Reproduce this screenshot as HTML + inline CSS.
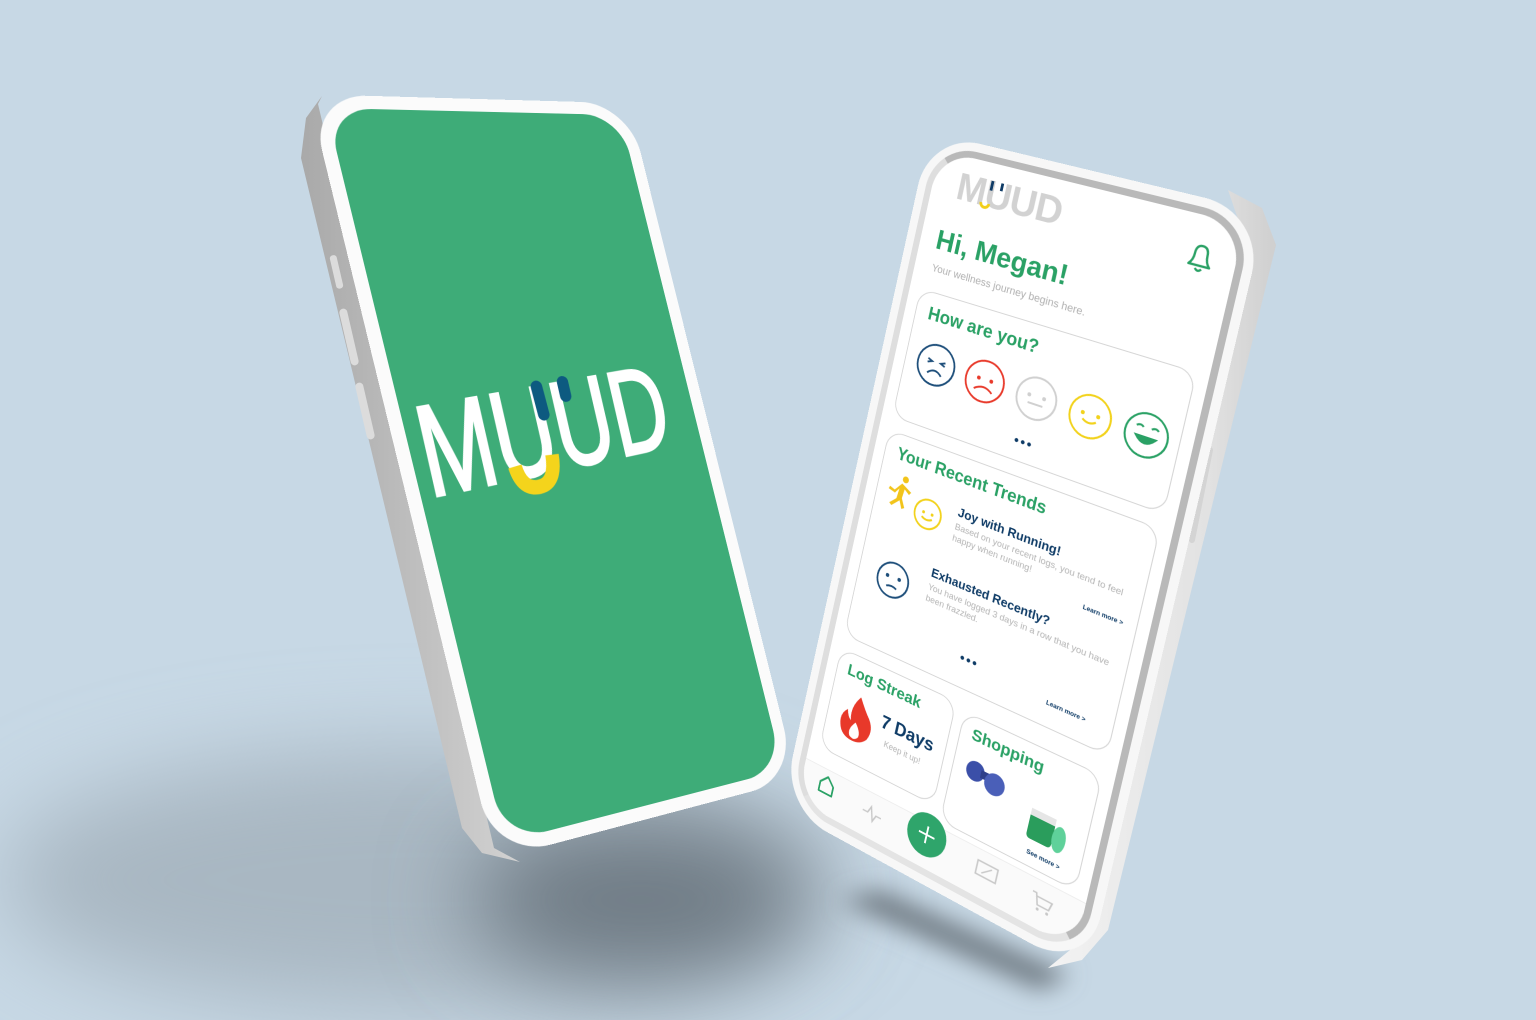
<!DOCTYPE html>
<html><head><meta charset="utf-8">
<style>
*{margin:0;padding:0;box-sizing:border-box}
html,body{width:1536px;height:1020px;overflow:hidden;background:#c7d8e5;font-family:"Liberation Sans",sans-serif}
.abs{position:absolute}
#bg{position:absolute;left:0;top:0}
.scr{position:absolute;left:0;top:0;transform-origin:0 0}
#L{width:300px;height:700px;transform:matrix3d(1.22647,0.06903,0,0.0003975,0.24679,1.0337,0,-0.000017667,0,0,1,0,326,108,0,1)}
#R{width:320px;height:720px;transform:matrix3d(0.52644,0.15725,0,-0.00034272,-0.16533,0.93618,0,0.000041749,0,0,1,0,940,150,0,1)}
.n{font-family:"Liberation Sans Narrow","Liberation Sans",sans-serif}
.g{color:#2aa165}
.card{position:absolute;border:1.6px solid #d6d6d6;border-radius:18px;background:#fff}
.t{position:absolute;font-weight:bold}
.sm{position:absolute;font-size:9.5px;color:#b4b4b4;line-height:12px}
.lm{position:absolute;font-size:6.5px;font-weight:bold;color:#0e3b66}
</style></head><body>
<svg id="bg" width="1536" height="1020">
<defs>
<filter id="b1" x="-50%" y="-50%" width="200%" height="200%"><feGaussianBlur stdDeviation="45"/></filter>
<filter id="b2" x="-50%" y="-50%" width="200%" height="200%"><feGaussianBlur stdDeviation="12"/></filter>
<linearGradient id="sd" x1="0" y1="0" x2="1" y2="0"><stop offset="0" stop-color="#a9a9a9"/><stop offset="1" stop-color="#d2d2d2"/></linearGradient>
<linearGradient id="rs" x1="0" y1="0" x2="1" y2="0"><stop offset="0" stop-color="#f3f3f3"/><stop offset="0.7" stop-color="#e2e2e2"/><stop offset="1" stop-color="#cfcfcf"/></linearGradient>
</defs>
<ellipse cx="420" cy="880" rx="420" ry="130" fill="#a9b7c2" filter="url(#b1)"/>
<ellipse cx="640" cy="900" rx="170" ry="80" fill="#707c85" filter="url(#b1)"/>
<path d="M840 900 L1040 990 L1070 975 L880 890Z" fill="#6f7a83" filter="url(#b2)"/>
<path d="M322 96 L306 118 L301 158 L462 828 L482 853 L520 862 L494 848 L318 104Z" fill="url(#sd)"/>
<rect x="333" y="255" width="7" height="34" rx="3" fill="#dcdcdc" transform="rotate(-13 336 272)"/>
<rect x="345" y="308" width="8" height="58" rx="4" fill="#dcdcdc" transform="rotate(-13 349 337)"/>
<rect x="361" y="382" width="8" height="58" rx="4" fill="#dcdcdc" transform="rotate(-13 365 411)"/>
<path d="M1228 190 L1262 208 L1276 245 L1108 930 L1082 960 L1048 968 L1070 950 L1240 225Z" fill="url(#rs)"/>
<path d="M1210 450 L1192 540" stroke="#d4d4d4" stroke-width="6" stroke-linecap="round"/>
<path d="M1155 660 L1134 750" stroke="#d4d4d4" stroke-width="6" stroke-linecap="round"/>
</svg>

<div id="L" class="scr">
 <div class="abs" style="left:-13px;top:-13px;width:326px;height:726px;border-radius:54px;background:#fbfbfb"></div>
 <div class="abs" style="left:0;top:0;width:300px;height:700px;border-radius:42px;background:#3eac78"></div>
 <svg class="abs" style="left:0;top:0" width="300" height="700">
  <g transform="rotate(-5 150 320) skewX(-6)">
   <text x="42" y="362" font-family="Liberation Sans Narrow, Liberation Sans, sans-serif" font-size="122" fill="#fff" stroke="#fff" stroke-width="3" textLength="262" lengthAdjust="spacingAndGlyphs">MUUD</text>
   <path d="M130 350 Q132 374 150 374 Q168 374 170 346" stroke="#f4d41c" stroke-width="14" fill="none"/>
   <path d="M170 278 L171 306 M198 278 L198 292" stroke="#0d5a80" stroke-width="12" stroke-linecap="round"/>
  </g>
 </svg>
</div>

<div id="R" class="scr">
 <div class="abs" style="left:-16px;top:-16px;width:352px;height:752px;border-radius:58px;background:#f7f7f7"></div>
 <div class="abs" style="left:-7px;top:-7px;width:334px;height:734px;border-radius:48px;border:7px solid #b9b9b9;border-left-color:#dedede;border-bottom-color:#e4e4e4"></div>
 <div class="abs" style="left:0;top:0;width:320px;height:720px;border-radius:42px;background:#fff;overflow:hidden">
  <div class="abs n" style="left:28px;top:10px;font-size:40px;font-weight:bold;color:#d2d2d2;letter-spacing:-1px">MUUD</div>
  <div class="abs" style="left:56px;top:42px;width:12px;height:6px;border:3px solid #f2cf1a;border-top:none;border-radius:0 0 6px 6px"></div>
  <div class="abs" style="left:64px;top:18px;width:3px;height:10px;background:#0e3b66"></div>
  <div class="abs" style="left:75px;top:18px;width:3px;height:8px;background:#0e3b66"></div>
  <svg class="abs" style="left:272px;top:24px" width="30" height="34" viewBox="0 0 30 34"><path d="M5 24 Q9 20 9 13 Q9 5 15 5 Q21 5 21 13 Q21 20 25 24Z" fill="none" stroke="#2aa165" stroke-width="2.2" stroke-linejoin="round"/><path d="M12 27 Q15 31 18 27" fill="none" stroke="#2aa165" stroke-width="2.2"/></svg>
  <div class="t n g" style="left:18px;top:76px;font-size:29px">Hi, Megan!</div>
  <div class="abs" style="left:20px;top:116px;font-size:11px;color:#b0b0b0">Your wellness journey begins here.</div>

  <div class="card" style="left:12px;top:146px;width:296px;height:140px">
   <div class="t n g" style="left:14px;top:12px;font-size:19px">How are you?</div>
   <svg class="abs" style="left:8px;top:44px" width="282" height="60">
    <g fill="none" stroke-width="2">
     <circle cx="27" cy="28" r="21" stroke="#1d4e7a"/><path d="M17 23 l5 2 l-5 2 M37 23 l-5 2 l5 2 M19 38 q8 -8 16 0" stroke="#1d4e7a"/>
     <circle cx="83" cy="28" r="21" stroke="#e8392a"/><path d="M73 38 q10 -8 20 0" stroke="#e8392a"/>
     <circle cx="140" cy="28" r="21" stroke="#d0d0d0"/><path d="M132 34 h16" stroke="#d0d0d0"/>
     <circle cx="197" cy="28" r="21" stroke="#f2d21b"/><path d="M190 32 q7 5 14 0" stroke="#f2d21b"/>
     <circle cx="254" cy="28" r="21" stroke="#2aa165"/><path d="M244 30 q10 12 20 0z" fill="#2aa165" stroke="#2aa165"/><path d="M243 21 q4 -3 7 0 M258 21 q4 -3 7 0" stroke="#2aa165"/>
    </g>
    <g fill="#e8392a"><circle cx="76" cy="26" r="2"/><circle cx="90" cy="26" r="2"/></g>
    <g fill="#d0d0d0"><circle cx="132" cy="26" r="2"/><circle cx="148" cy="26" r="2"/></g>
    <g fill="#f2d21b"><circle cx="189" cy="26" r="2"/><circle cx="205" cy="26" r="2"/></g>
   </svg>
   <div class="abs" style="left:135px;top:110px;font-size:14px;font-weight:bold;color:#0e3b66;letter-spacing:2px">•••</div>
  </div>

  <div class="card" style="left:12px;top:300px;width:296px;height:228px">
   <div class="t n g" style="left:14px;top:10px;font-size:18px">Your Recent Trends</div>
   <svg class="abs" style="left:10px;top:40px" width="80" height="150">
    <g fill="none" stroke-width="2">
     <circle cx="52" cy="30" r="15" stroke="#f2d21b"/><path d="M46 34 q6 4 12 0" stroke="#f2d21b"/>
     <circle cx="30" cy="110" r="18" stroke="#1d4e7a"/><path d="M24 118 q6 -3 12 0" stroke="#1d4e7a"/>
    </g>
    <g fill="#f2c41a"><circle cx="20" cy="4" r="3.5"/><path d="M17 9 L10 18 L4 16 L3 19 L11 21 L15 15 L14 26 L7 33 L10 35 L18 27 L22 35 L25 33 L20 24 L21 14 L27 18 L29 15 Z"/></g>
    <g fill="#f2d21b"><circle cx="47" cy="29" r="1.6"/><circle cx="57" cy="29" r="1.6"/></g>
    <g fill="#1d4e7a"><circle cx="23" cy="107" r="2"/><circle cx="37" cy="107" r="2"/></g>
   </svg>
   <div class="t" style="left:94px;top:48px;font-size:13px;color:#0e3b66">Joy with Running!</div>
   <div class="sm" style="left:94px;top:66px;width:190px">Based on your recent logs, you tend to feel happy when running!</div>
   <div class="lm" style="left:240px;top:96px">Learn more &gt;</div>
   <div class="t" style="left:80px;top:118px;font-size:13px;color:#0e3b66">Exhausted Recently?</div>
   <div class="sm" style="left:80px;top:136px;width:200px">You have logged 3 days in a row that you have been frazzled.</div>
   <div class="abs" style="left:130px;top:188px;font-size:14px;font-weight:bold;color:#0e3b66;letter-spacing:2px">•••</div>
   <div class="lm" style="left:226px;top:200px">Learn more &gt;</div>
  </div>

  <div class="card" style="left:12px;top:542px;width:138px;height:112px">
   <div class="t n g" style="left:12px;top:8px;font-size:17px">Log Streak</div>
   <svg class="abs" style="left:12px;top:38px" width="44" height="50" viewBox="0 0 44 50"><path d="M22 2 Q30 14 36 20 Q44 30 38 42 Q32 50 22 50 Q8 50 5 38 Q2 28 10 20 Q12 28 16 30 Q12 16 22 2Z" fill="#e8392a"/><path d="M22 30 Q30 38 28 44 Q24 50 18 46 Q14 40 22 30Z" fill="#fff"/></svg>
   <div class="t n" style="left:62px;top:44px;font-size:19px;color:#0e3b66">7 Days</div>
   <div class="abs" style="left:70px;top:70px;font-size:9px;color:#b4b4b4">Keep it up!</div>
  </div>
  <div class="card" style="left:160px;top:548px;width:148px;height:118px">
   <div class="t n g" style="left:12px;top:8px;font-size:17px">Shopping</div>
   <svg class="abs" style="left:10px;top:38px" width="130" height="70">
    <circle cx="14" cy="14" r="10" fill="#3b4fa8"/><rect x="20" y="10" width="12" height="8" fill="#2e3f8a"/><circle cx="36" cy="18" r="11" fill="#4a5fb8"/>
    <rect x="78" y="22" width="26" height="30" rx="4" fill="#2a9d5c"/><rect x="78" y="22" width="26" height="7" fill="#e6e6e6"/><ellipse cx="110" cy="40" rx="7" ry="13" fill="#5fd19a"/>
   </svg>
   <div class="lm" style="left:92px;top:100px">See more &gt;</div>
  </div>

  <div class="abs" style="left:0;top:672px;width:320px;height:48px;background:#fafafa;border-top:1px solid #eee"></div>
  <svg class="abs" style="left:0;top:660px" width="320" height="60">
   <path d="M22 28 L30 20 L38 28 L38 38 L22 38Z" fill="none" stroke="#2aa165" stroke-width="2" stroke-linejoin="round"/>
   <path d="M76 34 h6 l3 -7 l4 14 l3 -7 h6" fill="none" stroke="#c8c8c8" stroke-width="1.6"/>
   <circle cx="150" cy="26" r="22" fill="#2fa56b"/>
   <path d="M150 17 v18 M141 26 h18" stroke="#fff" stroke-width="2"/>
   <rect x="208" y="24" width="22" height="14" fill="none" stroke="#c8c8c8" stroke-width="1.6"/><path d="M214 35 l10 -8" stroke="#c8c8c8" stroke-width="1.4"/>
   <path d="M268 26 h4 l3 11 h12 l2 -8 h-16" fill="none" stroke="#c8c8c8" stroke-width="1.6"/><circle cx="276" cy="41" r="1.5" fill="#c8c8c8"/><circle cx="286" cy="41" r="1.5" fill="#c8c8c8"/>
  </svg>
 </div>
</div>
</body></html>
